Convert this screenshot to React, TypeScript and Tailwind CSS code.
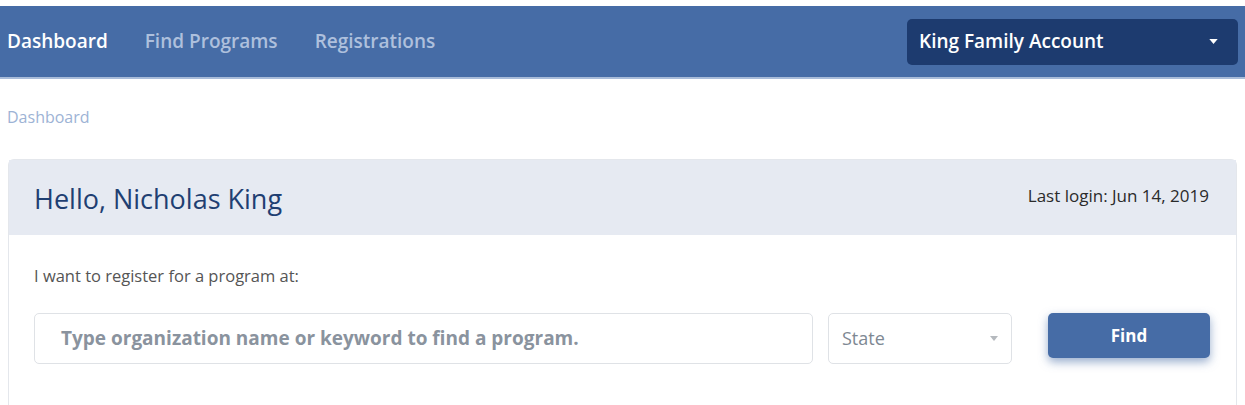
const font = { fontFamily: '"Open Sans", Lato, sans-serif' }

function Caret({ className }: { className: string }) {
  return (
    <svg viewBox="0 0 10 6" className={className} fill="currentColor">
      <path d="M0 0h10L5 6z" />
    </svg>
  )
}

export default function App() {
  return (
    <div className="h-[405px] w-[1245px] overflow-hidden bg-white" style={font}>
      <div className="h-[6px]" />
      <nav className="flex h-[73px] items-center justify-between border-b-2 border-[#a9bcd9] bg-[#466ca6] pl-[7px] pr-[7px]">
        <div className="flex items-center gap-[37px] text-[19px] font-semibold">
          <span className="text-white">Dashboard</span>
          <span className="text-[#aec0dd]">Find Programs</span>
          <span className="text-[#aec0dd]">Registrations</span>
        </div>
        <button className="flex h-[46px] w-[331px] items-center justify-between rounded-[5px] bg-[#1d3b6f] pl-3 pr-5 text-[19px] font-semibold text-white">
          King Family Account
          <Caret className="h-[5px] w-[9px]" />
        </button>
      </nav>

      <div className="flex h-[80px] items-center px-[7px] pb-1 text-[16px] text-[#9db3d5]">Dashboard</div>

      <div className="mx-2 rounded-t-md border border-[#e4e7ec]">
        <div className="flex h-[75px] items-center justify-between bg-[#e6eaf2] pl-[25px] pr-[27px]">
          <h1 className="pt-1 text-[27px] text-[#1f3f72]">Hello, Nicholas King</h1>
          <span className="-mt-[3px] text-[17px] text-[#2b2b2b]">Last login: Jun 14, 2019</span>
        </div>
        <div className="px-[25px] pt-[29px] pb-16">
          <p className="text-[16.5px] leading-6 text-[#555]">I want to register for a program at:</p>
          <div className="mt-[25px] flex items-start">
            <div className="flex h-[51px] w-[779px] items-center rounded-[5px] border border-[#dfe2e6] pl-[26px] text-[19px] font-bold text-[#8a939e]">
              Type organization name or keyword to find a program.
            </div>
            <div className="ml-[15px] flex h-[51px] w-[184px] items-center justify-between rounded-[5px] border border-[#dfe2e6] pl-[13px] pr-[13px] text-[18px] text-[#7e8893]">
              State
              <Caret className="h-[5px] w-[8px] text-[#b5b9be]" />
            </div>
            <button className="ml-9 h-[45px] w-[162px] rounded-[5px] bg-[#466ca6] text-[17px] font-bold text-white shadow-[0_4px_10px_rgba(70,108,166,0.55)]">
              Find
            </button>
          </div>
        </div>
      </div>
    </div>
  )
}
